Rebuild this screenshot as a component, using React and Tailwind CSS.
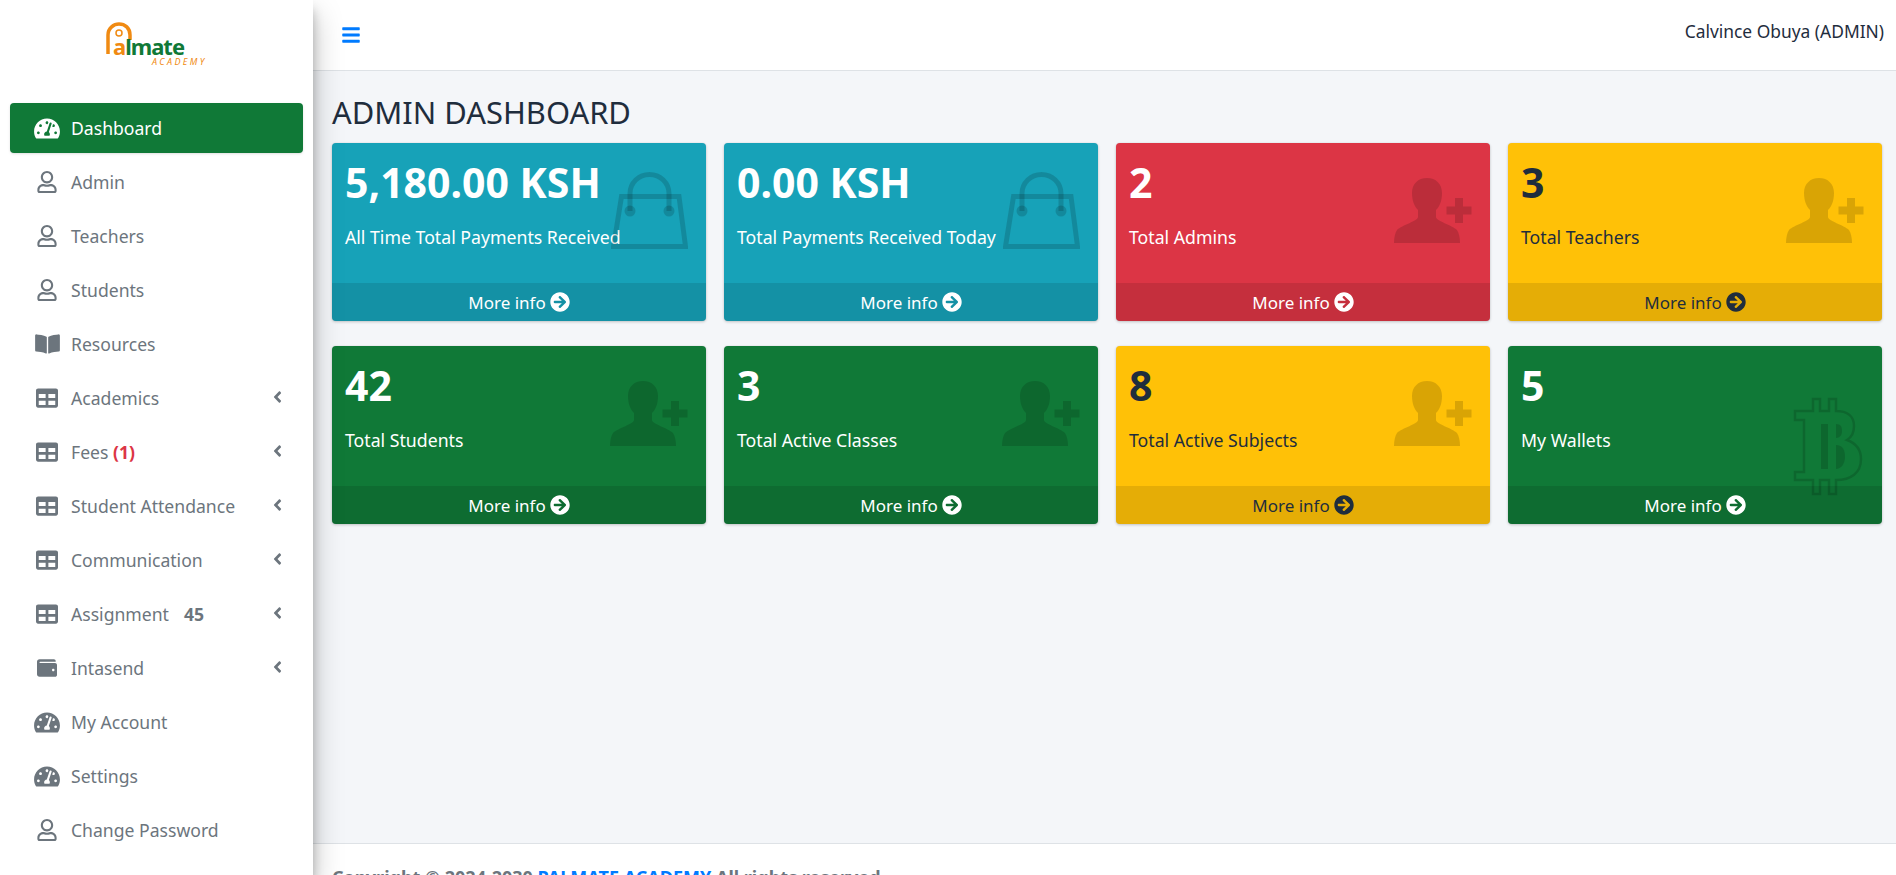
// App.jsx
// Admin dashboard: sidebar, top bar, stat cards, clipped footer
import React from 'react';
import {
  FaTachometerAlt,
  FaRegUser,
  FaBookOpen,
  FaTable,
  FaWallet,
  FaAngleLeft,
  FaArrowCircleRight,
  FaBars,
} from 'react-icons/fa';

function Logo() {
  return (
    <svg width="110" height="48" viewBox="0 0 110 48" className="block">
      <path d="M3 33V14C3 7 9 3 14 3C20 3 25 7 25 14V19" fill="none" stroke="#f08a12" strokeWidth="3.500" />
      <circle cx="14" cy="12" r="3" fill="none" stroke="#f08a12" strokeWidth="1.500" />
      <text x="8" y="34" fontFamily="'Noto Sans', sans-serif" fontWeight="700" fontSize="22" letterSpacing="-1">
        <tspan fill="#f08a12">a</tspan>
        <tspan fill="#107937">lmate</tspan>
      </text>
      <text x="47" y="44" fontFamily="'Noto Sans', sans-serif" fontStyle="italic" fontSize="9" letterSpacing="2.400" fill="#f08a12">ACADEMY</text>
    </svg>
  );
}

function BagIcon() {
  return (
    <svg width="77" height="77" viewBox="0 0 77 77" fill="none" stroke="currentColor" strokeWidth="5">
      <path d="M10.500 24.500H68L74.500 74.500H2.500Z" />
      <path d="M19 39V21.500A19.500 19 0 0 1 58 21.500V39" />
      <circle cx="19" cy="39" r="5.500" fill="currentColor" stroke="none" />
      <circle cx="58" cy="39" r="5.500" fill="currentColor" stroke="none" />
    </svg>
  );
}

function PersonAddIcon() {
  return (
    <svg width="78" height="65" viewBox="0 0 78 65" fill="currentColor">
      <path d="M33 0C24 0 18 6 18 15C18 22 20 28 24 32V39C24 43 8 47 3 52C1 55 0 60 0 65H66C66 60 65 55 63 52C58 47 42 43 42 39V32C46 28 48 22 48 15C48 6 42 0 33 0Z" />
      <path d="M61 20H69V28.500H77.500V36.500H69V45H61V36.500H52.500V28.500H61Z" />
    </svg>
  );
}

function BitcoinIcon() {
  return (
    <svg width="70" height="99" viewBox="0 0 70 99" fill="none" stroke="currentColor" strokeWidth="2.500">
      <path d="M20 2V14H2V23H11V75H2V83H20V97H27V83H36V97H43V83C58 83 68 76 68 62C68 52 62 46 54 43C59 40 61 35 61 29C61 19 54 14 43 14V2H36V14H27V2Z" />
      <path d="M28 27H35V72H28Z" fill="currentColor" stroke="none" />
      <path d="M43 27C48 27 49 30 49 34C49 38 47 41 43 41Z" fill="currentColor" stroke="none" />
      <path d="M43 48C50 48 52 53 52 60C52 67 48 72 43 72Z" fill="currentColor" stroke="none" />
    </svg>
  );
}

const NAV_ITEMS = [
  { label: 'Dashboard', icon: 'gauge', active: true },
  { label: 'Admin', icon: 'user' },
  { label: 'Teachers', icon: 'user' },
  { label: 'Students', icon: 'user' },
  { label: 'Resources', icon: 'book' },
  { label: 'Academics', icon: 'table', arrow: true },
  { label: 'Fees', icon: 'table', arrow: true, fees: true },
  { label: 'Student Attendance', icon: 'table', arrow: true },
  { label: 'Communication', icon: 'table', arrow: true },
  { label: 'Assignment', icon: 'table', arrow: true, count: '45' },
  { label: 'Intasend', icon: 'wallet', arrow: true },
  { label: 'My Account', icon: 'gauge' },
  { label: 'Settings', icon: 'gauge' },
  { label: 'Change Password', icon: 'user' },
];

function NavIcon({ name }) {
  if (name === 'gauge') return <FaTachometerAlt className="h-[23px] w-[26px]" />;
  if (name === 'user') return <FaRegUser className="h-[22px] w-[20px]" />;
  if (name === 'book') return <FaBookOpen className="h-[22px] w-[25px]" />;
  if (name === 'table') return <FaTable className="h-[22px] w-[22px]" />;
  return <FaWallet className="h-[20px] w-[20px]" />;
}

function NavItem({ item }) {
  return (
    <a
      className={`mx-[10px] mb-[4px] flex h-[50px] items-center rounded-[4px] pl-[24px] pr-[19px] text-[17.600px] ${
        item.active ? 'bg-[#107937] text-white shadow-sm' : 'text-[#6c757d]'
      }`}
    >
      <span className="flex w-[26px] shrink-0 justify-center">
        <NavIcon name={item.icon} />
      </span>
      <span className="ml-[11px] flex-1 whitespace-nowrap pt-[1px]">
        {item.label}
        {item.fees && <b className="text-[#dc3545]"> (1)</b>}
        {item.count && <b className="ml-[15px]">{item.count}</b>}
      </span>
      {item.arrow && <FaAngleLeft className="mb-[2px] h-[18px] w-[13px]" />}
    </a>
  );
}

const CARDS = [
  { value: '5,180.00 KSH', label: 'All Time Total Payments Received', color: 'bg-[#17a2b8]', icon: 'bag' },
  { value: '0.00 KSH', label: 'Total Payments Received Today', color: 'bg-[#17a2b8]', icon: 'bag' },
  { value: '2', label: 'Total Admins', color: 'bg-[#dc3545]', icon: 'person' },
  { value: '3', label: 'Total Teachers', color: 'bg-[#ffc107]', icon: 'person', dark: true },
  { value: '42', label: 'Total Students', color: 'bg-[#107937]', icon: 'person' },
  { value: '3', label: 'Total Active Classes', color: 'bg-[#107937]', icon: 'person' },
  { value: '8', label: 'Total Active Subjects', color: 'bg-[#ffc107]', icon: 'person', dark: true },
  { value: '5', label: 'My Wallets', color: 'bg-[#107937]', icon: 'bitcoin' },
];

function StatCard({ card }) {
  return (
    <div
      className={`relative flex h-[178px] flex-col overflow-hidden rounded-[4px] shadow-[0_0_1px_rgba(0,0,0,0.125),0_1px_3px_rgba(0,0,0,0.2)] ${card.color} ${
        card.dark ? 'text-[#1f2d3d]' : 'text-white'
      }`}
    >
      <div className="flex-1 px-[13px] pt-[11px]">
        <div className="h-[56px] whitespace-nowrap text-[41px] font-bold leading-[56px]">{card.value}</div>
        <div className="mt-[14px] whitespace-nowrap text-[17.700px] leading-[26px]">{card.label}</div>
      </div>
      {card.icon === 'bag' && (
        <div className="absolute right-[18px] top-[29px] text-black/15">
          <BagIcon />
        </div>
      )}
      {card.icon === 'person' && (
        <div className="absolute right-[18px] top-[35px] text-black/15">
          <PersonAddIcon />
        </div>
      )}
      {card.icon === 'bitcoin' && (
        <div className="absolute right-[19px] top-[51px] text-black/15">
          <BitcoinIcon />
        </div>
      )}
      <div className="flex h-[38px] items-center justify-center gap-[4px] bg-black/10 text-[17px]">
        <span className="pt-[1px]">More info</span>
        <FaArrowCircleRight className="h-[20px] w-[20px]" />
      </div>
    </div>
  );
}

export default function App() {
  return (
    <div className="flex h-screen overflow-hidden bg-[#f4f6f9] font-['Noto_Sans',sans-serif] text-[#1f2d3d]">
      {/* Sidebar */}
      <aside className="relative z-10 w-[313px] shrink-0 bg-white shadow-[0_14px_28px_rgba(0,0,0,0.25),0_10px_10px_rgba(0,0,0,0.22)]">
        <div className="flex h-[103px] justify-center pl-[6px] pt-[21px]">
          <Logo />
        </div>
        <nav>
          {NAV_ITEMS.map((item) => (
            <NavItem key={item.label} item={item} />
          ))}
        </nav>
      </aside>

      {/* Main area */}
      <div className="flex min-w-0 flex-1 flex-col">
        <header className="flex h-[71px] shrink-0 items-center justify-between border-b border-[#dee2e6] bg-white pl-[29px] pr-[12px]">
          <FaBars className="h-[20px] w-[18px] text-[#007bff]" />
          <span className="pb-[7px] text-[17.400px]">Calvince Obuya (ADMIN)</span>
        </header>

        <main className="flex-1 pl-[19px] pr-[14px]">
          <h1 className="mb-[5px] pt-[15px] text-[30.900px] font-normal leading-[52px] text-[#1f2d3d]">ADMIN DASHBOARD</h1>
          <div className="grid grid-cols-4 gap-x-[18px] gap-y-[25px]">
            {CARDS.map((card) => (
              <StatCard key={card.label} card={card} />
            ))}
          </div>
        </main>

        <footer className="h-[32px] shrink-0 whitespace-nowrap border-t border-[#dee2e6] bg-white pl-[19px] pt-[23px] text-[18px] font-bold leading-[20px] text-[#6c757d]">
          Copyright © 2024-2030 <a className="text-[#007bff]">PALMATE ACADEMY</a> All rights reserved.
        </footer>
      </div>
    </div>
  );
}
